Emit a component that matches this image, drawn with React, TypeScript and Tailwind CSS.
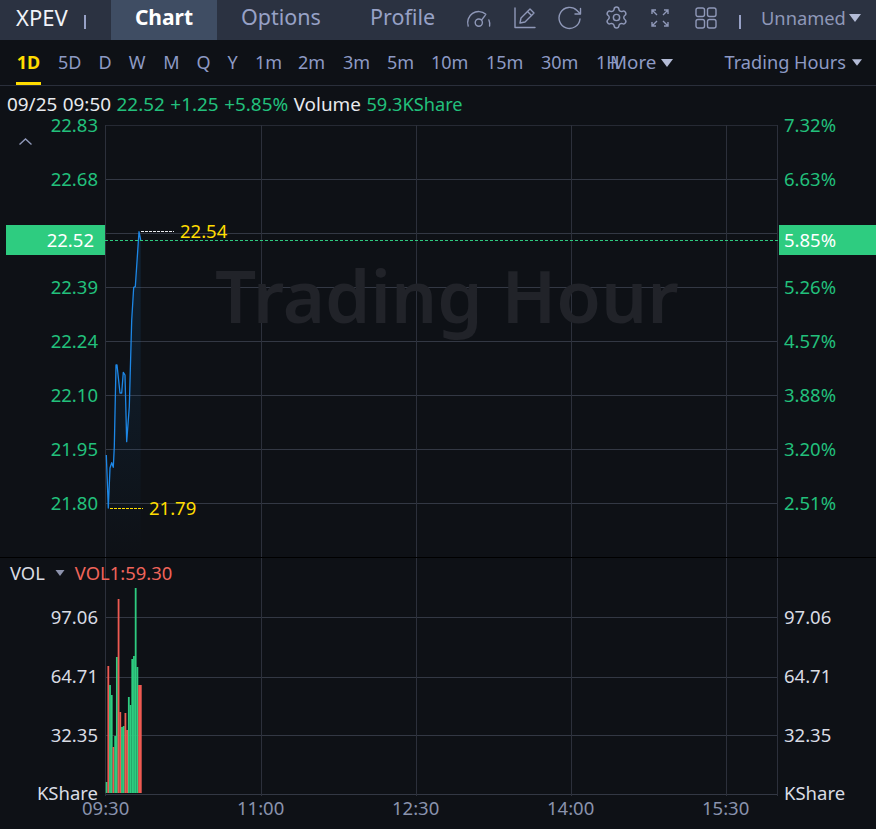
import React from 'react';
import { Settings } from 'lucide-react';

const font = { fontFamily: '"Noto Sans", sans-serif' };

const periods = [
  ['1D', 16, 25], ['5D', 58, 23], ['D', 98, 14], ['W', 128, 18], ['M', 163, 17], ['Q', 196, 15], ['Y', 227, 11],
  ['1m', 255, 27], ['2m', 298, 27], ['3m', 343, 26], ['5m', 387, 27], ['10m', 431, 37], ['15m', 486, 37], ['30m', 541, 37],
] as const;

const priceLeft = ['22.83', '22.68', '', '22.39', '22.24', '22.10', '21.95', '21.80'];
const priceRight = ['7.32%', '6.63%', '', '5.26%', '4.57%', '3.88%', '3.20%', '2.51%'];
const volLabels = ['97.06', '64.71', '32.35'];
const times = ['09:30', '11:00', '12:30', '14:00', '15:30'];

const linePts = '1.3,331 3.3,384 5,344 6.7,338.7 8.3,343.3 9.3,322.7 11,241 12,241 15,269 16.7,269 18.3,248.3 20,251 21.7,317.7 24.3,282.7 26.7,196 28.7,163.3 30.3,162.7 34,107.7 35.7,116';

const bars: [number, 'g' | 'r'][] = [
  [782, 'g'], [666, 'r'], [685, 'g'], [695, 'g'], [747, 'r'], [736, 'g'], [657, 'g'], [599, 'r'], [712, 'r'], [727, 'g'], [726, 'g'],
  [713, 'r'], [730, 'r'], [697, 'g'], [705, 'g'], [659, 'g'], [656, 'g'], [588, 'g'], [667, 'g'], [685, 'r'], [685, 'r'],
];

function Caret({ className }: { className: string }) {
  return (
    <svg viewBox="0 0 12 8" className={className} fill="currentColor">
      <path d="M0 0h12L6 8z" />
    </svg>
  );
}

function Gauge() {
  return (
    <svg width="26" height="26" viewBox="0 0 26 26" fill="none" stroke="currentColor" strokeWidth="1.4" strokeLinecap="round">
      <path d="M2.2 21a11 11 0 0 1 17.6-11.8" />
      <path d="M23.6 21a11 11 0 0 0-.7-6" />
      <circle cx="12.8" cy="17.6" r="3.6" />
      <path d="M15.6 15l3.6-4.6" />
    </svg>
  );
}

function PenLine() {
  return (
    <svg width="24" height="24" viewBox="0 0 24 24" fill="none" stroke="currentColor" strokeWidth="1.4" strokeLinejoin="round" strokeLinecap="round">
      <path d="M2 2v19.500h20" />
      <path d="M7 17l1-5 9-9 4 4-9 9z" />
      <path d="M14.500 5.500l4 4" />
    </svg>
  );
}

function Redo() {
  return (
    <svg width="24" height="24" viewBox="0 0 24 24" fill="none" stroke="currentColor" strokeWidth="1.4" strokeLinecap="round" strokeLinejoin="round">
      <path d="M22 13a10.500 10.500 0 1 1-3-8.500l3 3" />
      <path d="M22.500 2.500v5.500h-5.500" />
    </svg>
  );
}

function Expand() {
  return (
    <svg width="20" height="20" viewBox="0 0 20 20" fill="none" stroke="currentColor" strokeWidth="1.400">
      <path d="M2 6V2h4M2 2l5 5M14 2h4v4M18 2l-5 5M2 14v4h4M2 18l5-5M18 14v4h-4M18 18l-5-5" />
    </svg>
  );
}

function Tiles() {
  return (
    <svg width="22" height="22" viewBox="0 0 22 22" fill="none" stroke="currentColor" strokeWidth="1.400">
      <rect x="1" y="1" width="8.500" height="8.500" rx="2" />
      <rect x="12.500" y="1" width="8.500" height="8.500" rx="2" />
      <rect x="1" y="12.500" width="8.500" height="8.500" rx="2" />
      <rect x="12.500" y="12.500" width="8.500" height="8.500" rx="2" />
    </svg>
  );
}

export default function App() {
  return (
    <div className="w-[876px] h-[829px] bg-[#0e1116] overflow-hidden flex flex-col" style={font}>
      {/* top tabs */}
      <div className="h-10 pb-[5px] bg-[#2b3241] flex items-center text-[#97a1c6] shrink-0">
        <div className="w-[111px] flex items-center pl-4 text-[#f1f3f8] text-[22px]">
          XPEV
          <span className="ml-4 w-[2px] h-[14px] mt-[8px] bg-[#97a1c6]" />
        </div>
        <div className="w-[106px] h-10 pb-[4px] self-start bg-[#3f4d63] flex items-center justify-center text-white text-[21px] font-bold">Chart</div>
        <div className="w-[119px] pl-[24px] text-[21.500px] whitespace-nowrap">Options</div>
        <div className="w-[112px] pl-[34px] text-[21.500px]">Profile</div>
        <div className="flex items-center w-[287px] text-[#8f98b8]">
          <span className="ml-[18px]"><Gauge /></span>
          <span className="ml-[21px]"><PenLine /></span>
          <span className="ml-[21px]"><Redo /></span>
          <span className="ml-[22px]"><Settings size={25} strokeWidth={1.400} /></span>
          <span className="ml-[21px]"><Expand /></span>
          <span className="ml-[25px]"><Tiles /></span>
        </div>
        <span className="w-[2px] h-[14px] mt-[8px] bg-[#97a1c6] ml-[4px]" />
        <span className="ml-[20px] text-[18.300px] text-[#8f98b8] whitespace-nowrap">Unnamed</span>
        <Caret className="w-3 h-2 ml-[3px] text-[#b3bbd6]" />
      </div>

      {/* period bar */}
      <div className="h-[46px] shrink-0 flex border-b border-[#2a2f3b] relative text-[#8d9ac4] text-[18px]">
        <div className="flex-1 flex items-center relative">
          {periods.map(([label, x, w], i) => (
            <span
              key={label}
              className={`text-center whitespace-nowrap ${i === 0 ? 'text-[#ffdc00] font-bold' : ''}`}
              style={{ width: w, marginLeft: i === 0 ? x : x - periods[i - 1][1] - periods[i - 1][2] }}
            >
              {label}
            </span>
          ))}
          <span className="ml-[18px] w-[14px] whitespace-nowrap">1H</span>
          <span className="text-[18.800px]">More</span>
          <Caret className="w-3 h-2 ml-[5px] text-[#b3bbd6]" />
          <span className="absolute left-[16px] bottom-0 w-[25px] h-[3px] bg-[#ffdc00]" />
        </div>
        <div className="flex items-center pr-[14px]">
          <span className="text-[18.200px] whitespace-nowrap">Trading Hours</span>
          <Caret className="w-[10px] h-[7px] ml-[6px] text-[#b3bbd6]" />
        </div>
      </div>

      {/* quote line */}
      <div className="h-[38px] shrink-0 pl-[7px] pt-[6px] text-[18.900px] [word-spacing:0.6px] leading-[24px] whitespace-nowrap text-[#22c07c]">
        <span className="text-[#e8eaee]">09/25 09:50</span> 22.52 +1.25 +5.85% <span className="text-[#e8eaee]">Volume</span> <span className="text-[18.200px]">59.3KShare</span>
      </div>

      {/* price panel */}
      <div className="flex h-[433px] shrink-0 relative">
        <div className="w-[105px] shrink-0 relative text-[#22c07c] text-[18.500px]">
          <div className="-mt-[26px]">
            {priceLeft.map((p, i) => (
              <div key={i} className="h-[54px] flex items-center justify-end pr-[7px]">{p}</div>
            ))}
          </div>
          <svg className="absolute left-[18px] top-[13px] text-[#8f98b8]" width="15" height="9" viewBox="0 0 15 9" fill="none" stroke="currentColor" strokeWidth="1.400">
            <path d="M1.500 7.500L7.500 2l6 5.500" />
          </svg>
        </div>
        <div className="w-[673px] shrink-0 relative">
          <svg width="673" height="433" className="block">
            <defs>
              <linearGradient id="area" x1="0" y1="0" x2="0" y2="1">
                <stop offset="0" stopColor="#1c8ff0" stopOpacity="0.14" />
                <stop offset="1" stopColor="#1c8ff0" stopOpacity="0" />
              </linearGradient>
            </defs>
            <g stroke="#2c303b" strokeWidth="1">
              {[1, 55, 109, 163, 217, 271, 325, 379].map(y => <line key={y} x1="0" x2="673" y1={y + 0.5} y2={y + 0.5} stroke={y === 1 ? '#262a34' : '#333844'} />)}
              {[0, 156, 311, 466, 621].map(x => <line key={x} y1="1" y2="433" x1={x + 0.5} x2={x + 0.5} />)}
              <line x1="672.500" x2="672.500" y1="1" y2="433" />
            </g>
            <polygon points={`${linePts} 35.7,433 1.3,433`} fill="url(#area)" />
            <polyline points={linePts} fill="none" stroke="#1d87e6" strokeWidth="1.300" strokeLinejoin="round" />
            <line x1="0" x2="673" y1="116.500" y2="116.500" stroke="#2ecc80" strokeDasharray="3 2" />
            <line x1="36" x2="69" y1="107.500" y2="107.500" stroke="#e8eaee" strokeDasharray="3 1" />
            <line x1="5" x2="38" y1="384.500" y2="384.500" stroke="#ffdc00" strokeDasharray="3 1" />
          </svg>
          <div className="absolute left-[75px] top-[94px] text-[18.500px] leading-[26px] text-[#ffdc00]">22.54</div>
          <div className="absolute left-[44px] top-[371px] text-[18.500px] leading-[26px] text-[#ffdc00]">21.79</div>
          <div className="absolute left-[110px] top-[121px] text-[72.500px] leading-[100px] font-semibold text-[#212329] whitespace-nowrap">Trading Hour</div>
        </div>
        <div className="flex-1 text-[#22c07c] text-[18.500px] pl-[6px]">
          <div className="-mt-[26px]">
            {priceRight.map((p, i) => (
              <div key={i} className="h-[54px] flex items-center">{p}</div>
            ))}
          </div>
        </div>
        {/* current price tags */}
        <div className="absolute left-[6px] top-[101px] w-[99px] h-[30px] bg-[#2ecc80] flex items-center justify-end pr-[11px] text-white text-[18.500px]">22.52</div>
        <div className="absolute left-[779px] top-[101px] w-[97px] h-[30px] bg-[#2ecc80] flex items-center pl-[5px] text-white text-[18.500px]">5.85%</div>
      </div>

      {/* volume panel */}
      <div className="flex h-[239px] shrink-0 border-t border-black relative">
        <div className="w-[105px] shrink-0 text-[#d9dce4] text-[18.500px]">
          <div className="mt-[29px]">
            {volLabels.map(v => (
              <div key={v} className="h-[59px] flex items-center justify-end pr-[7px]">{v}</div>
            ))}
          </div>
          <div className="text-right pr-[7px] mt-[16px] leading-[26px] whitespace-nowrap">KShare</div>
        </div>
        <div className="w-[673px] shrink-0">
          <svg width="673" height="238" className="block">
            <g stroke="#2c303b" strokeWidth="1">
              {[59, 119, 177, 236].map(y => <line key={y} x1="0" x2="673" y1={y + 0.5} y2={y + 0.5} stroke="#333844" />)}
              {[0, 156, 311, 466, 621, 672].map(x => <line key={x} y1="0" y2="238" x1={x + 0.5} x2={x + 0.5} />)}
            </g>
            {bars.map(([top, c], i) => (
              <rect key={i} x={0.7 + i * 1.71} y={top - 558} width="1.800" height={793 - top} fill={c === 'g' ? '#2ecc80' : '#ee5a52'} />
            ))}
          </svg>
        </div>
        <div className="flex-1 text-[#d9dce4] text-[18.500px] pl-[6px]">
          <div className="mt-[29px]">
            {volLabels.map(v => (
              <div key={v} className="h-[59px] flex items-center">{v}</div>
            ))}
          </div>
          <div className="mt-[16px] leading-[26px]">KShare</div>
        </div>
        <div className="absolute left-[10px] top-[2px] flex items-center text-[18.400px] leading-[26px] whitespace-nowrap">
          <span className="text-[#d9dce4]">VOL</span>
          <Caret className="w-[10px] h-[6px] ml-[10px] text-[#8d93ad]" />
          <span className="ml-[10px] text-[#f0645a]">VOL1:59.30</span>
        </div>
      </div>

      {/* time axis */}
      <div className="flex-1 flex pl-[82px] text-[#8a93ad] text-[18.500px]">
        {times.map(t => (
          <span key={t} className="w-[155px] leading-[24px]">{t}</span>
        ))}
      </div>
    </div>
  );
}
